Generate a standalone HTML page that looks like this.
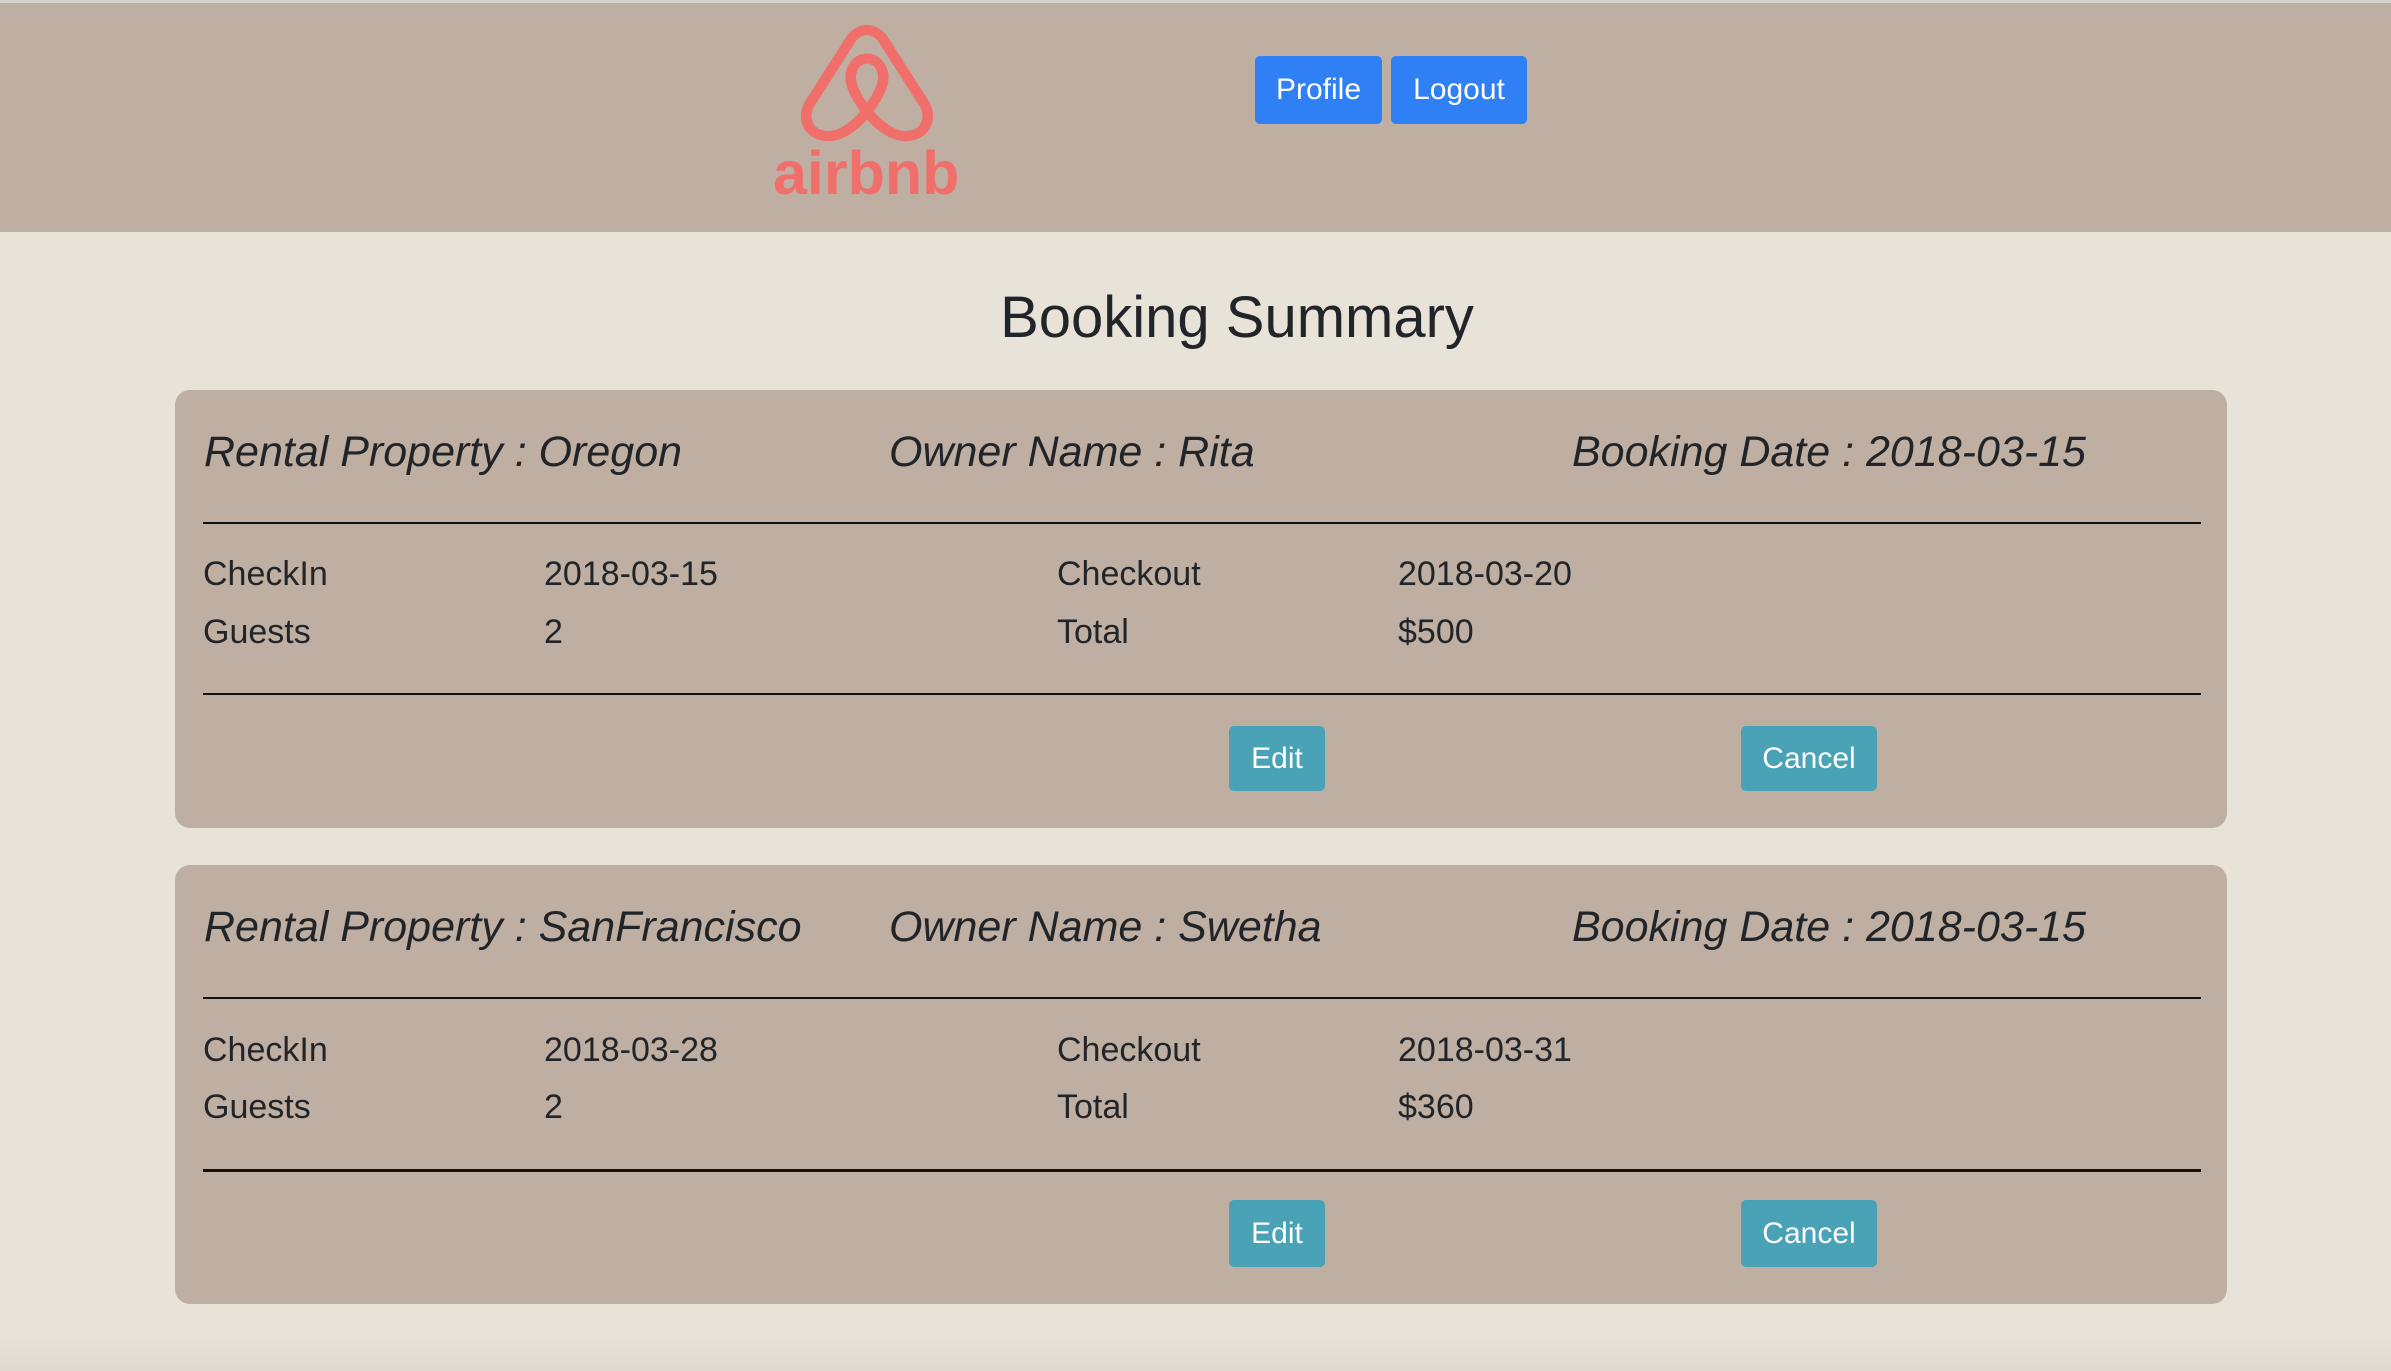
<!DOCTYPE html>
<html><head><meta charset="utf-8"><style>
*{margin:0;padding:0;box-sizing:border-box}
body{width:2391px;height:1371px;background:#e7e3d9;font-family:"Liberation Sans",Arial,sans-serif;color:#212529;position:relative;overflow:hidden}
.hdr{position:absolute;left:0;top:0;width:2391px;height:232px;background:#bfafa2;border-top:3px solid #d6d2cc}
.btn{position:absolute;color:#fff;font-size:30px;display:flex;align-items:center;justify-content:center;border-radius:5px}
.bp{background:#2f80f4}
.bi{background:#4aa2b6}
.t{position:absolute;white-space:nowrap}
.card{position:absolute;left:175px;width:2052px;background:#bfafa2;border-radius:15px}
.h{font-style:italic;font-size:43px;line-height:1}
.r{font-size:34px;line-height:1}
.hr{position:absolute;left:28px;width:1998px;height:2px;background:#111}
</style></head><body>
<div class="hdr">
<svg style="position:absolute;left:796px;top:21px" width="143" height="122" viewBox="0 0 135 120" preserveAspectRatio="none"><path d="M67 86 C55 102 40 112 27 110 C12 108 6 94 12 80 L50 18 C58 2 76 2 84 18 L122 80 C128 94 122 108 107 110 C94 112 79 102 67 86 C55 70 50 57 52 48 C54 39 60 34 67 34 C74 34 80 39 82 48 C84 57 79 70 67 86 Z" fill="none" stroke="#f16f6b" stroke-width="10" stroke-linejoin="round"/></svg>
<div class="t" style="left:773px;top:140px;font-size:61px;font-weight:bold;color:#f16f6b;line-height:1">airbnb</div>
<div class="btn bp" style="left:1255px;top:53px;width:127px;height:68px">Profile</div>
<div class="btn bp" style="left:1391px;top:53px;width:136px;height:68px">Logout</div>
</div>
<div class="t" style="left:0;width:2474px;text-align:center;top:289px;font-size:58px;line-height:1">Booking Summary</div>

<div class="card" style="top:390px;height:438px">
<div class="t h" style="left:29px;top:41px">Rental Property : Oregon</div>
<div class="t h" style="left:714px;top:41px">Owner Name : Rita</div>
<div class="t h" style="left:1397px;top:41px">Booking Date : 2018-03-15</div>
<div class="hr" style="top:132px"></div>
<div class="t r" style="left:28px;top:167px">CheckIn</div>
<div class="t r" style="left:369px;top:167px">2018-03-15</div>
<div class="t r" style="left:882px;top:167px">Checkout</div>
<div class="t r" style="left:1223px;top:167px">2018-03-20</div>
<div class="t r" style="left:28px;top:225px">Guests</div>
<div class="t r" style="left:369px;top:225px">2</div>
<div class="t r" style="left:882px;top:225px">Total</div>
<div class="t r" style="left:1223px;top:225px">$500</div>
<div class="hr" style="top:303px"></div>
<div class="btn bi" style="left:1054px;top:336px;width:96px;height:65px">Edit</div>
<div class="btn bi" style="left:1566px;top:336px;width:136px;height:65px">Cancel</div>
</div>

<div class="card" style="top:865px;height:439px">
<div class="t h" style="left:29px;top:41px">Rental Property : SanFrancisco</div>
<div class="t h" style="left:714px;top:41px">Owner Name : Swetha</div>
<div class="t h" style="left:1397px;top:41px">Booking Date : 2018-03-15</div>
<div class="hr" style="top:132px"></div>
<div class="t r" style="left:28px;top:168px">CheckIn</div>
<div class="t r" style="left:369px;top:168px">2018-03-28</div>
<div class="t r" style="left:882px;top:168px">Checkout</div>
<div class="t r" style="left:1223px;top:168px">2018-03-31</div>
<div class="t r" style="left:28px;top:225px">Guests</div>
<div class="t r" style="left:369px;top:225px">2</div>
<div class="t r" style="left:882px;top:225px">Total</div>
<div class="t r" style="left:1223px;top:225px">$360</div>
<div class="hr" style="top:304px;height:3px"></div>
<div class="btn bi" style="left:1054px;top:335px;width:96px;height:67px">Edit</div>
<div class="btn bi" style="left:1566px;top:335px;width:136px;height:67px">Cancel</div>
</div>
<div style="position:absolute;left:0;top:1335px;width:2391px;height:36px;background:linear-gradient(#e7e3d9,#dedad0)"></div>
</body></html>
